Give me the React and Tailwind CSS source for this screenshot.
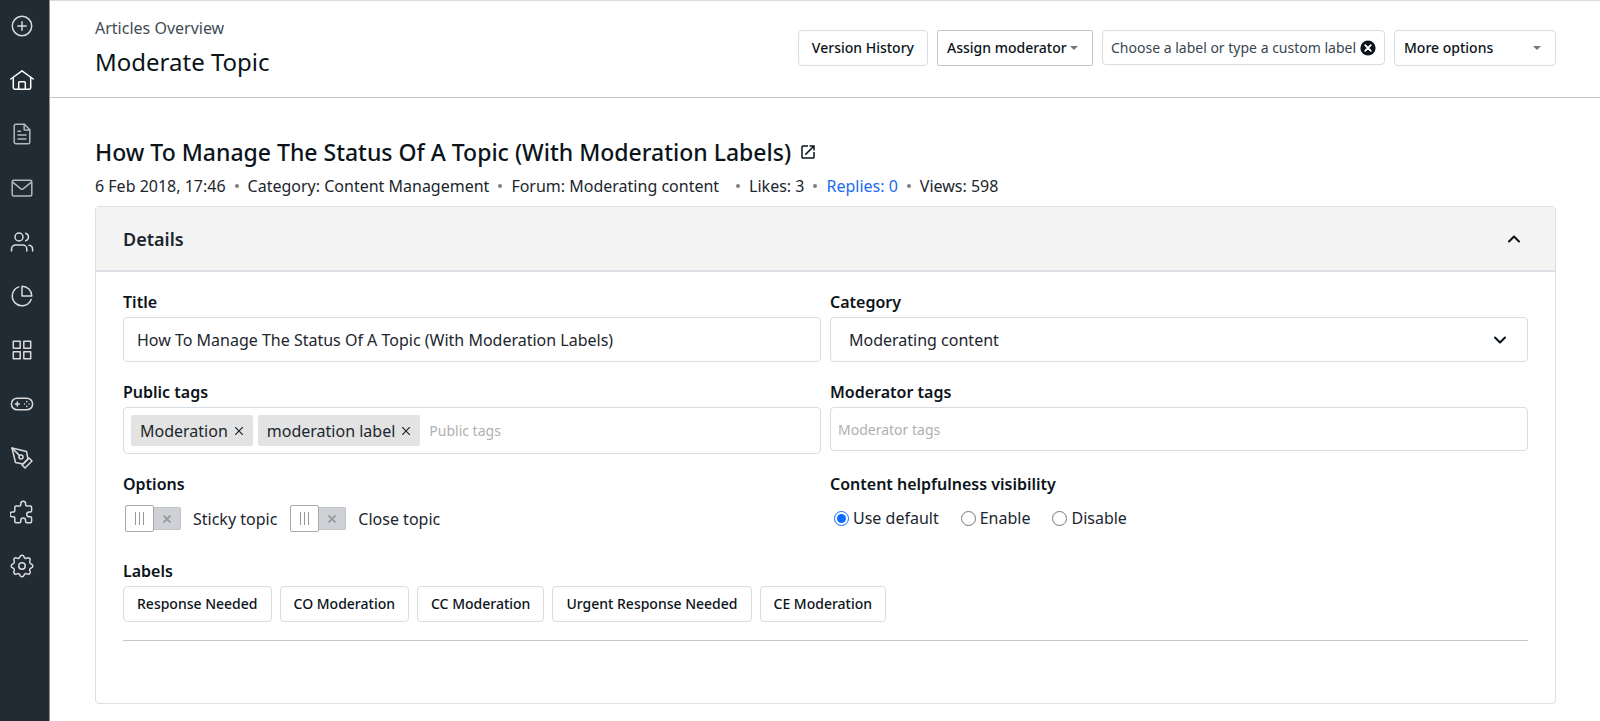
import React, { useState } from "react";
import { ChevronDown, ChevronUp } from "lucide-react";

const navItems = [
  {
    name: "Create",
    icon: (
      <>
        <circle cx="12" cy="12" r="9.7" />
        <path d="M12 7.8v8.4M7.8 12h8.4" />
      </>
    ),
  },
  {
    name: "Home",
    active: true,
    icon: (
      <>
        <path d="M.8 11 12 2.8 23.2 11" />
        <path d="M3.3 9.5v10.3a1.4 1.4 0 0 0 1.4 1.4h14.6a1.4 1.4 0 0 0 1.4-1.4V9.5" />
        <path d="M8.7 21v-6.2a1 1 0 0 1 1-1h4.6a1 1 0 0 1 1 1V21" />
      </>
    ),
  },
  {
    name: "Articles",
    muted: true,
    icon: (
      <>
        <path d="M14.5 2.2H6A1.8 1.8 0 0 0 4.2 4v16A1.8 1.8 0 0 0 6 21.8h12a1.8 1.8 0 0 0 1.8-1.8V7.8z" />
        <path d="M14.2 2.4v5.7h5.4M8 9.2h2.5M8 13h8M8 17h8" />
      </>
    ),
  },
  {
    name: "Messages",
    muted: true,
    icon: (
      <>
        <rect x="2.2" y="4.3" width="19.6" height="15.6" rx="1.5" />
        <path d="m2.6 6.2 8.3 6.6a1.8 1.8 0 0 0 2.2 0l8.3-6.6" />
      </>
    ),
  },
  {
    name: "Users",
    icon: (
      <>
        <circle cx="9" cy="7" r="4" />
        <path d="M1.5 21v-2a4 4 0 0 1 4-4h7.3a4 4 0 0 1 4 4v2M15.7 3.2a4 4 0 0 1 0 7.6M19 15.2a4 4 0 0 1 3.6 4V21" />
      </>
    ),
  },
  {
    name: "Reports",
    icon: (
      <>
        <path d="M8.8 2.9a9.7 9.7 0 1 0 12.3 12.5" />
        <path d="M12 2.2a9.8 9.8 0 0 1 9.8 9.8H12z" />
      </>
    ),
  },
  {
    name: "Apps",
    icon: (
      <>
        <rect x="3.3" y="3.3" width="6.9" height="6.9" />
        <rect x="13.8" y="3.3" width="6.9" height="6.9" />
        <rect x="3.3" y="13.8" width="6.9" height="6.9" />
        <rect x="13.8" y="13.8" width="6.9" height="6.9" />
      </>
    ),
  },
  {
    name: "Gamification",
    icon: (
      <>
        <rect x="1.4" y="6.2" width="21.2" height="11.6" rx="5.8" />
        <path d="M7.3 10v4M5.3 12h4" />
        <path d="M16.8 9.6v.1M16.8 14.3v.1M14.5 12h.1M19 12h.1" />
      </>
    ),
  },
  {
    name: "Design",
    icon: (
      <>
        <path d="m12 19 7-7 3 3-7 7z" />
        <path d="m18 13-1.500-7.500L2 2l3.500 14.500L13 18z" />
        <path d="m2 2 7.600 7.600" />
        <circle cx="11" cy="11" r="2" />
      </>
    ),
  },
  {
    name: "Integrations",
    viewBox: "2 2 20 20",
    icon: (
      <path
        transform="matrix(-1 0 0 1 24 0)"
        d="M5 7h3a1 1 0 0 0 1-1V5a2 2 0 0 1 4 0v1a1 1 0 0 0 1 1h3a1 1 0 0 1 1 1v3a1 1 0 0 0 1 1h1a2 2 0 0 1 0 4h-1a1 1 0 0 0-1 1v3a1 1 0 0 1-1 1h-3a1 1 0 0 1-1-1v-1a2 2 0 0 0-4 0v1a1 1 0 0 1-1 1H5a1 1 0 0 1-1-1v-3a1 1 0 0 1 1-1h1a2 2 0 0 0 0-4H5a1 1 0 0 1-1-1V8a1 1 0 0 1 1-1"
      />
    ),
  },
  {
    name: "Settings",
    viewBox: "2 2 20 20",
    icon: (
      <>
        <path d="M10.325 4.317c.426-1.756 2.924-1.756 3.350 0a1.724 1.724 0 0 0 2.573 1.066c1.543-.94 3.310.826 2.370 2.370a1.724 1.724 0 0 0 1.065 2.572c1.756.426 1.756 2.924 0 3.350a1.724 1.724 0 0 0-1.066 2.573c.94 1.543-.826 3.310-2.370 2.370a1.724 1.724 0 0 0-2.572 1.065c-.426 1.756-2.924 1.756-3.350 0a1.724 1.724 0 0 0-2.573-1.066c-1.543.94-3.310-.826-2.370-2.370a1.724 1.724 0 0 0-1.065-2.572c-1.756-.426-1.756-2.924 0-3.350a1.724 1.724 0 0 0 1.066-2.573c-.94-1.543.826-3.310 2.370-2.370 1 .608 2.296.07 2.572-1.065z" />
        <circle cx="12" cy="12" r="2.700" />
      </>
    ),
  },
];

const labelOptions = [
  "Response Needed",
  "CO Moderation",
  "CC Moderation",
  "Urgent Response Needed",
  "CE Moderation",
];

const Sidebar = () => (
  <nav className="flex w-[50px] shrink-0 flex-col gap-[30px] border-r border-[#8d9499] bg-[#212b33] pt-[14px] pl-[10px]">
    {navItems.map((item) => (
      <a
        key={item.name}
        href="#"
        aria-label={item.name}
        className={item.active ? "text-white" : item.muted ? "text-[#b4b8ba]" : "text-[#d8dadc]"}
      >
        <svg
          className="h-6 w-6"
          viewBox={item.viewBox || "0 0 24 24"}
          fill="none"
          stroke="currentColor"
          strokeWidth={item.viewBox ? "1.25" : "1.5"}
          strokeLinecap="round"
          strokeLinejoin="round"
        >
          {item.icon}
        </svg>
      </a>
    ))}
  </nav>
);

const Caret = () => (
  <svg className="h-1 w-2 text-[#777]" viewBox="0 0 8 4" fill="currentColor">
    <path d="M0 0h8L4 4z" />
  </svg>
);

const HeaderSelect = ({ label, className }) => (
  <div className="relative">
    <select
      aria-label={label}
      className={`h-9 appearance-none border bg-white pr-6 pl-[9px] text-sm font-medium text-[#0b141a] ${className}`}
    >
      <option>{label}</option>
    </select>
    <span className="pointer-events-none absolute inset-y-0 right-[15px] flex items-center">
      <Caret />
    </span>
  </div>
);

const Dot = () => <span className="h-1 w-1 rounded-full bg-[#808080]" />;

const Tag = ({ children, onRemove }) => (
  <span className="flex h-[31px] items-center gap-[7px] rounded-xs bg-[#e3e3e3] pr-[10px] pl-[9px]">
    {children}
    <button type="button" aria-label={`Remove ${children}`} onClick={onRemove}>
      <svg className="h-2 w-2" viewBox="0 0 8 8" stroke="currentColor" strokeWidth="1.2">
        <path d="m0 0 8 8M8 0 0 8" />
      </svg>
    </button>
  </span>
);

const Toggle = ({ label }) => (
  <label className="flex items-center">
    <input type="checkbox" className="peer sr-only" />
    <span className="flex h-[27px] w-[29px] items-center justify-center gap-[3px] rounded-xs border border-[#a9a9a9] bg-white peer-focus-visible:ring-2">
      <span className="h-[13px] w-px bg-[#999]" />
      <span className="h-[13px] w-px bg-[#999]" />
      <span className="h-[13px] w-px bg-[#999]" />
    </span>
    <span className="flex h-[23px] w-[27px] items-center justify-center rounded-r-xs border border-l-0 border-[#c2c5c8] bg-[#ced2d6] text-[#999]">
      <svg className="h-2 w-2" viewBox="0 0 8 8" stroke="currentColor" strokeWidth="1.8">
        <path d="m.5.5 7 7M7.500.5l-7 7" />
      </svg>
    </span>
    <span className="pl-3">{label}</span>
  </label>
);

const App = () => {
  const [title, setTitle] = useState("How To Manage The Status Of A Topic (With Moderation Labels)");
  const [customLabel, setCustomLabel] = useState("Choose a label or type a custom label");
  const [tags, setTags] = useState(["Moderation", "moderation label"]);
  const [visibility, setVisibility] = useState("Use default");

  const removeTag = (tag) => setTags(tags.filter((t) => t !== tag));

  return (
    <div className="flex min-h-screen bg-white font-['Noto_Sans',sans-serif] text-base leading-6 text-[#1c262e]">
      <Sidebar />

      <div className="min-w-0 flex-1 border-t border-[#dcdcdc]">
        {/* Page header */}
        <header className="flex items-start justify-between border-b border-[#c4c7c9] pt-[15px] pr-11 pb-[17px] pl-[45px]">
          <div>
            <a href="#" className="block text-[#3f4c56]">Articles Overview</a>
            <h1 className="mt-1 text-2xl leading-9 text-[#0b141a]">Moderate Topic</h1>
          </div>
          <div className="flex items-start gap-[9px] pt-[14px]">
            <button
              type="button"
              className="h-9 rounded-sm border border-[#d9dce2] px-[13px] text-sm font-medium text-[#0b141a]"
            >
              Version History
            </button>
            <HeaderSelect label="Assign moderator" className="w-[156px] rounded-xs border-[#c6c6c6]" />
            <div className="flex h-[35px] w-[283px] items-center gap-[2px] rounded-sm border border-[#d9dce2] px-2">
              <input
                type="text"
                aria-label="Label"
                value={customLabel}
                onChange={(e) => setCustomLabel(e.target.value)}
                className="min-w-0 flex-1 text-sm text-[#3a464f] outline-none"
              />
              <button type="button" aria-label="Clear label" onClick={() => setCustomLabel("")}>
                <svg className="h-4 w-4" viewBox="0 0 16 16">
                  <circle cx="8" cy="8" r="7.600" fill="#0b141a" />
                  <path d="m5.200 5.200 5.600 5.600M10.800 5.200l-5.600 5.600" stroke="#fff" strokeWidth="1.800" strokeLinecap="round" />
                </svg>
              </button>
            </div>
            <HeaderSelect label="More options" className="w-[162px] rounded-sm border-[#d9dce2]" />
          </div>
        </header>

        <main className="pt-9 pr-11 pb-4 pl-[45px]">
          {/* Topic heading */}
          <div className="flex items-center gap-2">
            <h2 className="text-[23px] leading-9 font-medium text-[#0b141a]">{title}</h2>
            <a href="#" aria-label="Open topic">
              <svg className="h-[18px] w-[18px]" viewBox="0 0 24 24" fill="#0b141a">
                <path d="M19 19H5V5h7V3H5a2 2 0 0 0-2 2v14a2 2 0 0 0 2 2h14c1.100 0 2-.9 2-2v-7h-2zM14 3v2h3.590l-9.830 9.830 1.410 1.410L19 6.410V10h2V3z" />
              </svg>
            </a>
          </div>
          <div className="mt-1 flex items-center gap-[9px]">
            <span>6 Feb 2018, 17:46</span>
            <Dot />
            <span>Category: Content Management</span>
            <Dot />
            <span className="pr-2">Forum: Moderating content</span>
            <Dot />
            <span>Likes: 3</span>
            <Dot />
            <a href="#" className="text-[#1a6bf0]">Replies: 0</a>
            <Dot />
            <span>Views: 598</span>
          </div>

          {/* Details panel */}
          <section className="mt-2 rounded-sm border border-[#dcdfe3]">
            <button
              type="button"
              aria-expanded="true"
              className="flex h-[65px] w-full items-center justify-between border-b-2 border-[#dde1e5] bg-[#f4f4f4] pr-[31px] pl-[27px]"
            >
              <span className="text-lg font-semibold">Details</span>
              <ChevronUp className="h-5 w-5 text-[#0b141a]" strokeWidth={2.5} />
            </button>

            <form className="px-[27px] pt-[18px] pb-[62px]">
              <div className="grid grid-cols-2 items-start gap-x-[9px] gap-y-[18px]">
                <div>
                  <label htmlFor="title" className="block font-semibold text-[#0b141a]">Title</label>
                  <input
                    id="title"
                    type="text"
                    value={title}
                    onChange={(e) => setTitle(e.target.value)}
                    className="mt-[3px] h-[45px] w-full rounded-sm border border-[#d9dce2] px-[13px]"
                  />
                </div>

                <div>
                  <label htmlFor="category" className="block font-semibold text-[#0b141a]">Category</label>
                  <div className="relative mt-[3px]">
                    <select
                      id="category"
                      className="block h-[45px] w-full appearance-none rounded-sm border border-[#d9dce2] bg-white px-[18px]"
                    >
                      <option>Moderating content</option>
                    </select>
                    <span className="pointer-events-none absolute inset-y-0 right-[18px] flex items-center text-[#0b141a]">
                      <ChevronDown className="h-5 w-5" strokeWidth={2.5} />
                    </span>
                  </div>
                </div>

                <div>
                  <label htmlFor="public-tags" className="block font-semibold text-[#0b141a]">Public tags</label>
                  <div className="mt-[3px] flex h-[47px] items-center gap-[5px] rounded-sm border border-[#d9dce2] px-[7px]">
                    {tags.map((tag) => (
                      <Tag key={tag} onRemove={() => removeTag(tag)}>{tag}</Tag>
                    ))}
                    <input
                      id="public-tags"
                      type="text"
                      placeholder="Public tags"
                      className="min-w-0 flex-1 pl-1 text-sm outline-none placeholder:text-[#b0b0b0]"
                    />
                  </div>
                </div>

                <div>
                  <label htmlFor="moderator-tags" className="block font-semibold text-[#0b141a]">Moderator tags</label>
                  <input
                    id="moderator-tags"
                    type="text"
                    placeholder="Moderator tags"
                    className="mt-[3px] h-11 w-full rounded-sm border border-[#d9dce2] px-[7px] text-sm placeholder:text-[#b0b0b0]"
                  />
                </div>

                <fieldset>
                  <legend className="font-semibold text-[#0b141a]">Options</legend>
                  <div className="flex items-center gap-[13px] pt-[9px] pl-[2px]">
                    <Toggle label="Sticky topic" />
                    <Toggle label="Close topic" />
                  </div>
                </fieldset>

                <fieldset>
                  <legend className="font-semibold text-[#0b141a]">Content helpfulness visibility</legend>
                  <div className="flex items-center gap-[22px] pt-[10px] pl-1">
                    {["Use default", "Enable", "Disable"].map((option) => (
                      <label key={option} className="flex items-center gap-1">
                        <input
                          type="radio"
                          name="visibility"
                          checked={visibility === option}
                          onChange={() => setVisibility(option)}
                          className="h-[15px] w-[15px] accent-[#0a6cff]"
                        />
                        {option}
                      </label>
                    ))}
                  </div>
                </fieldset>
              </div>

              <fieldset className="mt-[27px] border-b border-[#c4c7c9] pb-[18px]">
                <legend className="font-semibold text-[#0b141a]">Labels</legend>
                <div className="flex flex-wrap gap-2 pt-[3px]">
                  {labelOptions.map((label) => (
                    <button
                      key={label}
                      type="button"
                      className="h-9 rounded-sm border border-[#d9dce2] px-[13px] text-sm font-medium text-[#0b141a]"
                    >
                      {label}
                    </button>
                  ))}
                </div>
              </fieldset>
            </form>
          </section>
        </main>
      </div>
    </div>
  );
};

export default App;
